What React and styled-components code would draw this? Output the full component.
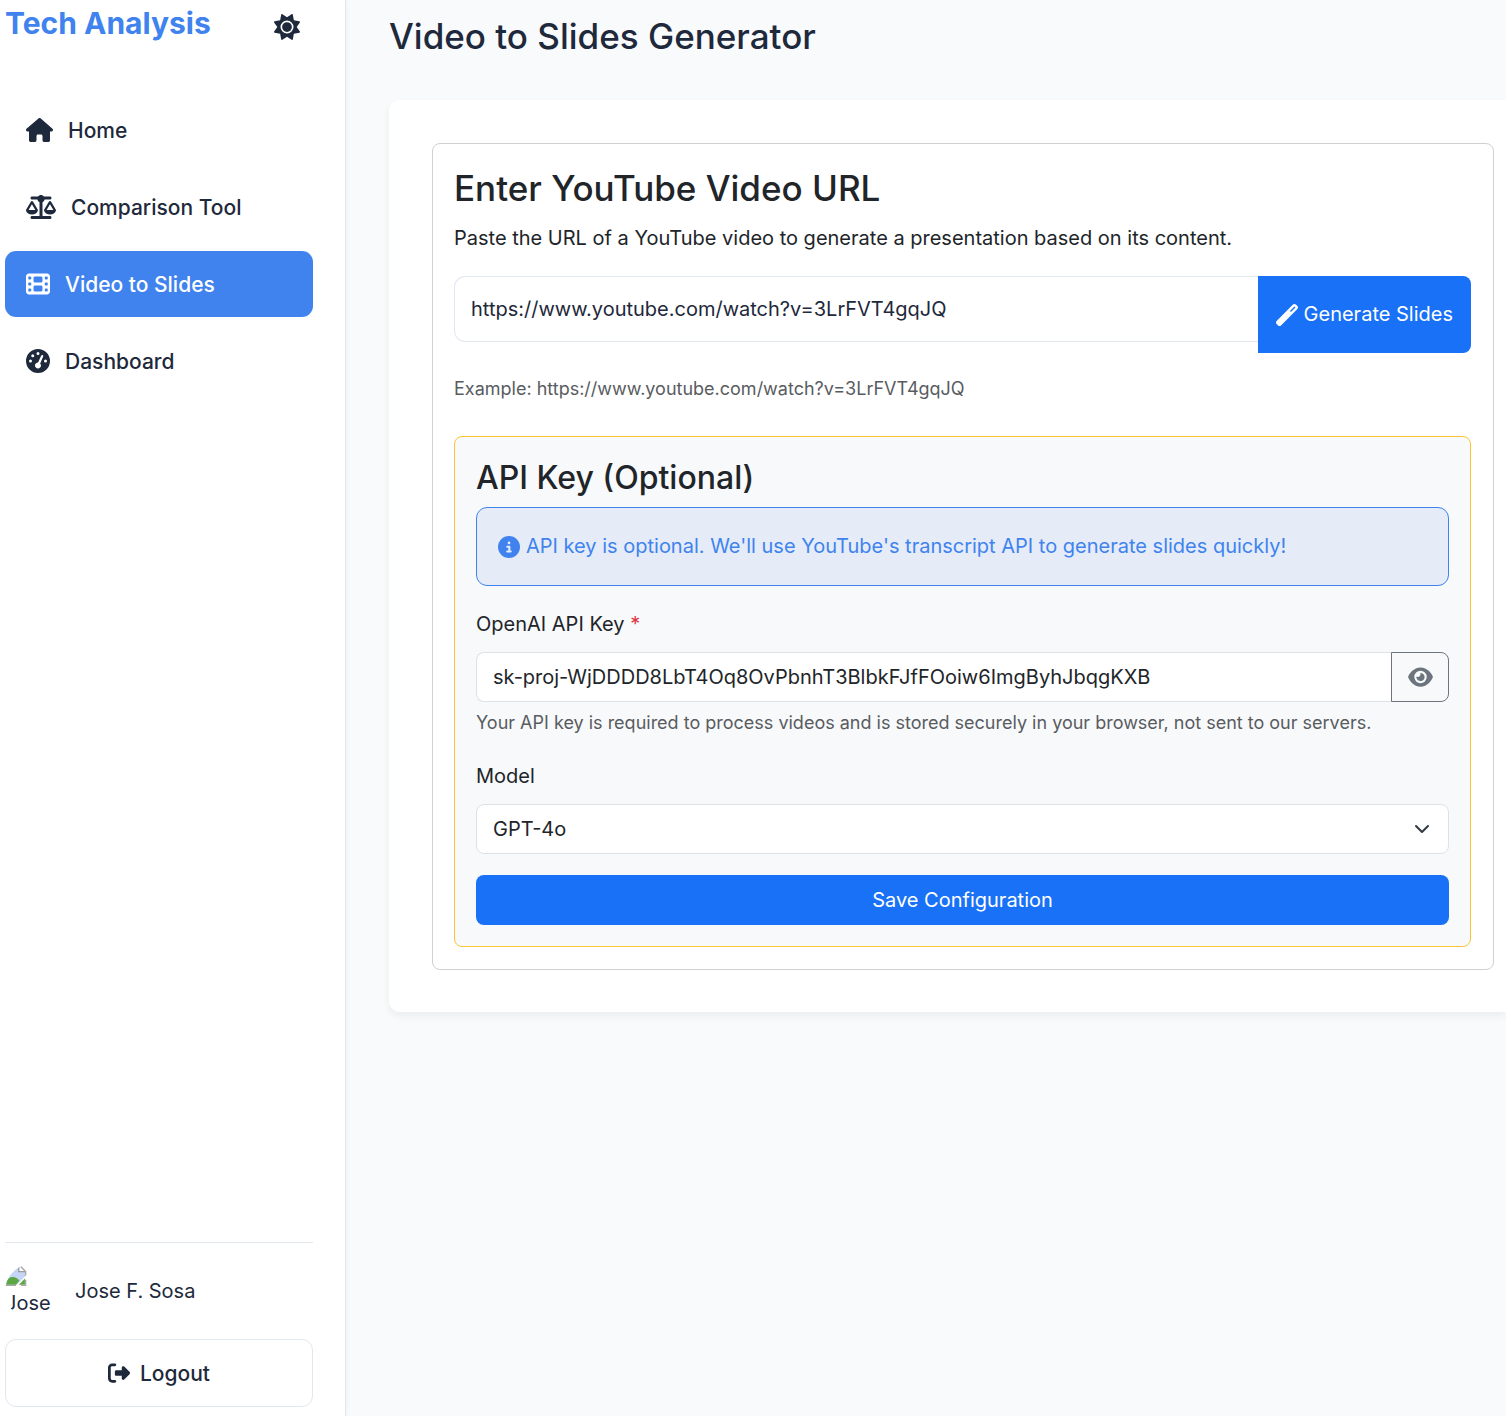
import React, { useState } from "react";
import styled, { createGlobalStyle, css } from "styled-components";
import {
  FaSun,
  FaHouse,
  FaScaleBalanced,
  FaFilm,
  FaGaugeHigh,
  FaRightFromBracket,
  FaWandMagic,
  FaCircleInfo,
  FaEye,
} from "react-icons/fa6";

const GlobalStyle = createGlobalStyle`
  *, *::before, *::after { box-sizing: border-box; }
  body {
    margin: 0;
    background: #f9fafc;
    color: #212529;
    font-family: Inter, "Liberation Sans", sans-serif;
    font-size: 20px;
    line-height: 33px;
  }
  button, input, select { font: inherit; color: inherit; margin: 0; }
  h1, h2, h3, p { margin: 0; }
`;

const Layout = styled.div`
  display: flex;
  min-height: 100vh;
  overflow-x: hidden;
`;

const Sidebar = styled.aside`
  flex: 0 0 346px;
  display: flex;
  flex-direction: column;
  padding: 0 32px 9px 5px;
  background: #ffffff;
  border-right: 1px solid #e2e8f0;
  box-shadow: 0 0 6px rgba(0, 0, 0, 0.05);
  color: #1e293b;
`;

const Brand = styled.div`
  display: flex;
  align-items: center;
  justify-content: space-between;
  padding-right: 13px;
  height: 54px;
`;

const BrandName = styled.div`
  font-size: 30px;
  font-weight: 700;
  line-height: 46px;
  padding-bottom: 8px;
  color: #4083ee;
`;

const ThemeButton = styled.button`
  display: flex;
  padding: 0;
  border: 0;
  background: none;
  cursor: pointer;
`;

const Nav = styled.nav`
  display: flex;
  flex-direction: column;
  gap: 11px;
  margin-top: 43px;
`;

const NavLink = styled.a`
  display: flex;
  align-items: center;
  gap: 15px;
  height: 66px;
  padding: 0 21px;
  border-radius: 11px;
  font-size: 21px;
  font-weight: 500;
  text-decoration: none;
  color: ${(p) => (p.$active ? "#ffffff" : "#1e293b")};
  background: ${(p) => (p.$active ? "#4083ee" : "transparent")};
`;

const Icon = styled.span`
  display: flex;
  flex: none;
  svg {
    height: ${(p) => p.$size}px;
    width: ${(p) => p.$width || p.$size}px;
  }
`;

const Account = styled.div`
  margin-top: auto;
  padding-top: 21px;
  border-top: 1px solid #e2e8f0;
`;

const User = styled.div`
  display: flex;
  align-items: center;
  gap: 15px;
  margin-bottom: 20px;
`;

const Avatar = styled.div`
  width: 55px;
  height: 55px;
  border-radius: 50%;
  overflow: hidden;
  line-height: 35px;
  svg { display: block; }
`;

const LogoutButton = styled.button`
  display: flex;
  align-items: center;
  justify-content: center;
  gap: 10px;
  width: 100%;
  height: 68px;
  border: 1px solid #e2e8f0;
  border-radius: 11px;
  background: transparent;
  font-size: 21px;
  font-weight: 500;
  cursor: pointer;
`;

const Main = styled.main`
  flex: 1;
  min-width: 0;
  padding: 13px 0 43px 43px;
`;

const PageTitle = styled.h1`
  font-size: 35px;
  font-weight: 500;
  line-height: 46px;
  color: #1e293b;
`;

const Card = styled.section`
  margin-top: 41px;
  padding: 43px 12px 42px 43px;
  background: #ffffff;
  border-radius: 11px 0 0 11px;
  box-shadow: 0 4px 8px rgba(0, 0, 0, 0.06);
`;

const Panel = styled.div`
  padding: 21px 22px 22px 21px;
  border: 1px solid #cfd0d1;
  border-radius: 8px;
`;

const PanelTitle = styled.h2`
  font-size: 35px;
  font-weight: 500;
  line-height: 46px;
  margin-bottom: 11px;
`;

const UrlRow = styled.div`
  display: flex;
  align-items: flex-start;
  margin: 21px 0;
`;

const field = css`
  width: 100%;
  min-width: 0;
  padding: 0 16px;
  background: #ffffff;
  border: 1px solid #dee2e6;
  outline: none;
`;

const UrlInput = styled.input`
  ${field}
  flex: 1;
  height: 66px;
  border-color: #e2e8f0;
  border-right: 0;
  border-radius: 11px 0 0 11px;
  color: #1e293b;
`;

const PrimaryButton = styled.button`
  display: flex;
  align-items: center;
  justify-content: center;
  gap: 6px;
  border: 0;
  background: #1871f6;
  color: #ffffff;
  white-space: nowrap;
  cursor: pointer;
`;

const GenerateButton = styled(PrimaryButton)`
  height: 77px;
  padding: 0 18px;
  border-radius: 0 8px 8px 0;
`;

const SaveButton = styled(PrimaryButton)`
  width: 100%;
  height: 50px;
  margin-top: 21px;
  border-radius: 8px;
`;

const Hint = styled.p`
  font-size: 18px;
  line-height: 29px;
  color: #595c5f;
`;

const KeyPanel = styled.section`
  margin-top: 33px;
  padding: 21px;
  background: #f8f9fb;
  border: 1px solid #fcc433;
  border-radius: 8px;
`;

const KeyTitle = styled.h3`
  font-size: 32px;
  font-weight: 500;
  line-height: 40px;
  margin-bottom: 9px;
`;

const Notice = styled.div`
  display: flex;
  align-items: center;
  gap: 6px;
  padding: 22px 21px;
  margin-bottom: 22px;
  border: 1px solid #4083ee;
  border-radius: 11px;
  background: #e5ecf8;
  color: #4083ee;
`;

const Label = styled.label`
  display: block;
  margin-bottom: 11px;
`;

const Required = styled.span`
  color: #dc3545;
`;

const KeyRow = styled.div`
  display: flex;
  margin-bottom: 6px;
`;

const KeyInput = styled.input`
  ${field}
  flex: 1;
  height: 50px;
  border-right: 0;
  border-radius: 8px 0 0 8px;
`;

const RevealButton = styled.button`
  display: flex;
  align-items: center;
  justify-content: center;
  width: 58px;
  border: 1px solid #6c757d;
  border-radius: 0 8px 8px 0;
  background: transparent;
  color: #6c757d;
  cursor: pointer;
`;

const ModelField = styled.div`
  margin-top: 23px;
`;

const SelectWrap = styled.div`
  display: grid;
  align-items: center;
  > * { grid-area: 1 / 1; }
  svg {
    justify-self: end;
    margin-right: 19px;
    pointer-events: none;
  }
`;

const ModelSelect = styled.select`
  ${field}
  height: 50px;
  border-radius: 8px;
  appearance: none;
`;

function BrokenImage() {
  return (
    <svg width="22" height="22" viewBox="0.5 0 16 16" aria-hidden="true">
      <path d="M1 1h9.5L15 5.5V9L9 15H1z" fill="#c5d5f5" />
      <path d="M1 15v-2.500C3 10 5 9 7 9.500c2 .500 3 1.500 4 2.500L8.500 15z" fill="#5aa744" />
      <path d="M15 10.500V15h-4.500z" fill="#5aa744" />
      <path d="M10.500 1v4.500H15" fill="#ffffff" stroke="#9b9b9b" />
      <path d="M1 15.500h7.500M1 .500h9.500L15.500 5.500V8.500M15.500 11.500v4h-3.500" fill="none" stroke="#a8a8a8" />
    </svg>
  );
}

const links = [
  { label: "Home", icon: FaHouse, width: 27 },
  { label: "Comparison Tool", icon: FaScaleBalanced, width: 30 },
  { label: "Video to Slides", icon: FaFilm, width: 24, active: true },
  { label: "Dashboard", icon: FaGaugeHigh, width: 24 },
];

export default function App() {
  const [url, setUrl] = useState("https://www.youtube.com/watch?v=3LrFVT4gqJQ");
  const [key, setKey] = useState("sk-proj-WjDDDD8LbT4Oq8OvPbnhT3BlbkFJfFOoiw6ImgByhJbqgKXB");

  return (
    <>
      <GlobalStyle />
      <Layout>
        <Sidebar>
          <Brand>
            <BrandName>Tech Analysis</BrandName>
            <ThemeButton type="button" aria-label="Toggle theme">
              <Icon $size={26}><FaSun /></Icon>
            </ThemeButton>
          </Brand>
          <Nav>
            {links.map(({ label, icon: Glyph, width, active }) => (
              <NavLink key={label} href="#" $active={active}>
                <Icon $size={24} $width={width}><Glyph /></Icon>
                {label}
              </NavLink>
            ))}
          </Nav>
          <Account>
            <User>
              <Avatar>
                <BrokenImage />
                Jose
              </Avatar>
              <span>Jose F. Sosa</span>
            </User>
            <LogoutButton type="button">
              <Icon $size={22}><FaRightFromBracket /></Icon>
              Logout
            </LogoutButton>
          </Account>
        </Sidebar>

        <Main>
          <PageTitle>Video to Slides Generator</PageTitle>
          <Card>
            <Panel>
              <PanelTitle>Enter YouTube Video URL</PanelTitle>
              <p>Paste the URL of a YouTube video to generate a presentation based on its content.</p>
              <UrlRow>
                <UrlInput
                  type="text"
                  aria-label="YouTube video URL"
                  value={url}
                  onChange={(e) => setUrl(e.target.value)}
                />
                <GenerateButton type="button">
                  <Icon $size={22}><FaWandMagic /></Icon>
                  Generate Slides
                </GenerateButton>
              </UrlRow>
              <Hint>Example: https://www.youtube.com/watch?v=3LrFVT4gqJQ</Hint>

              <KeyPanel>
                <KeyTitle>API Key (Optional)</KeyTitle>
                <Notice>
                  <Icon $size={22}><FaCircleInfo /></Icon>
                  API key is optional. We'll use YouTube's transcript API to generate slides quickly!
                </Notice>
                <Label htmlFor="api-key">
                  OpenAI API Key <Required>*</Required>
                </Label>
                <KeyRow>
                  <KeyInput
                    id="api-key"
                    type="text"
                    value={key}
                    onChange={(e) => setKey(e.target.value)}
                  />
                  <RevealButton type="button" aria-label="Show or hide key">
                    <Icon $size={22} $width={25}><FaEye /></Icon>
                  </RevealButton>
                </KeyRow>
                <Hint>
                  Your API key is required to process videos and is stored securely in your browser, not sent to our servers.
                </Hint>
                <ModelField>
                  <Label htmlFor="model">Model</Label>
                  <SelectWrap>
                    <ModelSelect id="model" defaultValue="gpt-4o">
                      <option value="gpt-4o">GPT-4o</option>
                    </ModelSelect>
                    <svg width="16" height="16" viewBox="0 0 16 16" aria-hidden="true">
                      <path
                        d="m2 5 6 6 6-6"
                        fill="none"
                        stroke="#343a40"
                        strokeWidth="2"
                        strokeLinecap="round"
                        strokeLinejoin="round"
                      />
                    </svg>
                  </SelectWrap>
                </ModelField>
                <SaveButton type="button">Save Configuration</SaveButton>
              </KeyPanel>
            </Panel>
          </Card>
        </Main>
      </Layout>
    </>
  );
}
